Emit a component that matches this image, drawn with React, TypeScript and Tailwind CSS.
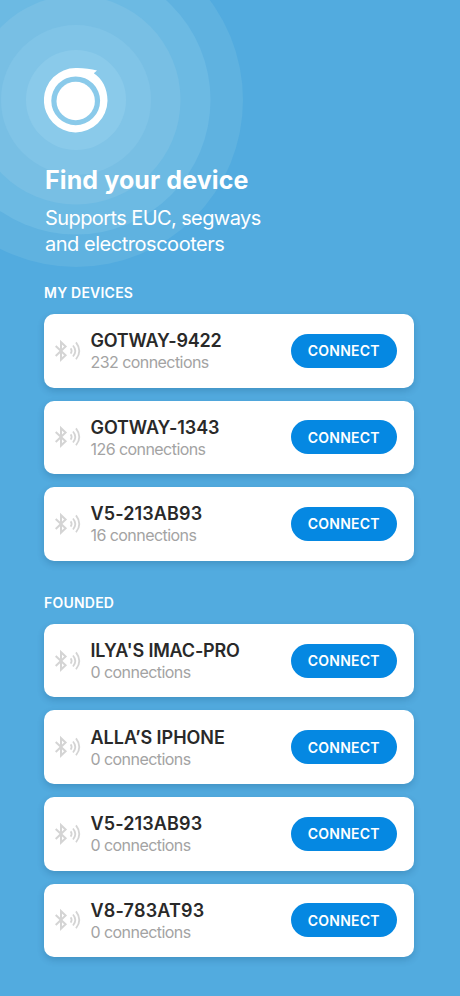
type Device = { name: string; count: number; tracking: string };

const myDevices: Device[] = [
  { name: 'GOTWAY-9422', count: 232, tracking: 'tracking-[-0.22px]' },
  { name: 'GOTWAY-1343', count: 126, tracking: 'tracking-[-0.1px]' },
  { name: 'V5-213AB93', count: 16, tracking: 'tracking-[0.12px]' },
];

const foundDevices: Device[] = [
  { name: "ILYA'S IMAC-PRO", count: 0, tracking: 'tracking-[-0.18px]' },
  { name: 'ALLA’S IPHONE', count: 0, tracking: 'tracking-[-0.02px]' },
  { name: 'V5-213AB93', count: 0, tracking: 'tracking-[0.12px]' },
  { name: 'V8-783AT93', count: 0, tracking: 'tracking-[0.2px]' },
];

function BluetoothIcon() {
  return (
    <svg className="h-6 w-7 shrink-0" viewBox="0 0 28 24" fill="none" stroke="#d4d4d4" strokeWidth="2">
      <path d="M1.7 6.9 11.6 16.3 7 20.6V3.2L11.6 7.6 1.7 17" />
      <path d="M16.6 9.4Q18.6 12 16.6 14.6M19 6.5Q23.6 12 19 17.5M22 3.4Q28.6 12 22 20.2" strokeWidth="1.8" />
    </svg>
  );
}

function Card({ device }: { device: Device }) {
  return (
    <li className="flex h-[73.6px] items-center rounded-[10px] bg-white pr-[17px] pl-[10px] shadow-[0_3px_7px_rgba(0,50,90,0.2)]">
      <BluetoothIcon />
      <div className="ml-[8.5px] grow pt-[2px] whitespace-nowrap">
        <h3 className={`text-[18px] leading-[22px] font-semibold text-[#292929] ${device.tracking}`}>{device.name}</h3>
        <p className="text-[16px] leading-[21px] font-normal tracking-[-0.56px] text-[#a3a3a3]">{device.count} connections</p>
      </div>
      <button className="h-[34px] w-[106.5px] rounded-full bg-[#0588e2] text-[14px] font-semibold tracking-[0.25px] text-white">CONNECT</button>
    </li>
  );
}

function Section({ title, devices }: { title: string; devices: Device[] }) {
  return (
    <section>
      <h2 className="text-[14px] leading-5 font-semibold tracking-[0.22px] text-white">{title}</h2>
      <ul className="mt-[11px] flex flex-col gap-[13px]">
        {devices.map((d, i) => (
          <Card key={i} device={d} />
        ))}
      </ul>
    </section>
  );
}

export default function App() {
  return (
    <main className="relative h-[996px] w-[460px] overflow-hidden bg-[#52abdf] pt-[66px] pr-[46px] pl-[44px] font-['Inter',sans-serif]">
      <svg className="absolute top-0 left-0 h-[280px] w-[260px]" viewBox="0 0 260 280">
        <circle cx="76" cy="100" r="167" fill="#5fb2e0" />
        <circle cx="76" cy="100" r="134.5" fill="#6cbae3" />
        <circle cx="76" cy="100" r="104.5" fill="#78bfe4" />
        <circle cx="76" cy="100" r="75" fill="#80c4e7" />
        <circle cx="76" cy="100" r="50" fill="#8acaea" />
      </svg>
      <div className="relative">
        <header>
          <svg className="h-[68px] w-[66px]" viewBox="44 66 66 68">
            <circle cx="75.7" cy="101" r="19.2" fill="white" />
            <path
              fill="white"
              fillRule="evenodd"
              d="M75.7 68C82 67.7 91 69 97 70.4L93.8 73.2C102 78.5 107.5 88 107.5 100.8A31.8 32.2 0 1 1 75.7 68ZM75.7 76.4A24.4 24.4 0 1 0 75.7 125.2A24.4 24.4 0 1 0 75.7 76.4Z"
            />
          </svg>
          <h1 className="mt-[30px] ml-px text-[25px] leading-8 font-bold tracking-[0.1px] whitespace-nowrap text-white">Find your device</h1>
          <p className="mt-[9px] ml-px text-[20px] leading-[26px] font-normal text-white">
            <span className="block tracking-[-0.59px]">Supports EUC, segways</span>
            <span className="block tracking-[-0.47px]">and electroscooters</span>
          </p>
        </header>
        <div className="mt-[26px] flex flex-col gap-[32px]">
          <Section title="MY DEVICES" devices={myDevices} />
          <Section title="FOUNDED" devices={foundDevices} />
        </div>
      </div>
    </main>
  );
}
